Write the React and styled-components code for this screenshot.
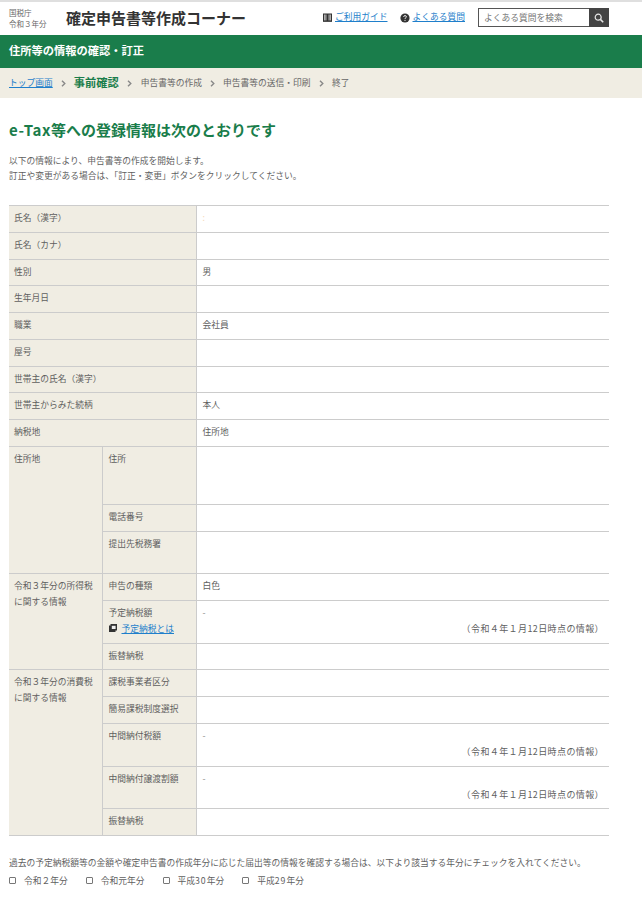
import styled, { createGlobalStyle } from 'styled-components';

const GlobalStyle = createGlobalStyle`
  html, body {
    margin: 0;
    padding: 0;
    background: #fff;
  }
  body {
    font-family: "Noto Sans CJK JP", "Noto Sans", sans-serif;
    font-size: 8.75px;
    line-height: 15.75px;
    color: #5f5f5f;
  }
`;

const green = '#1a7d4b';
const beige = '#f0ede3';
const line = '#cccccc';
const blue = '#1f7fcb';

const Header = styled.header`
  display: flex;
  align-items: center;
  box-sizing: border-box;
  height: 35px;
  padding: 0 33px 2px 9px;
  border-top: 2px solid #dfdfdf;
`;

const Agency = styled.div`
  width: 57px;
  font-size: 7.5px;
  line-height: 11px;
  color: #666;
`;

const SiteTitle = styled.div`
  flex: 1;
  font-size: 15px;
  line-height: 20px;
  font-weight: 700;
  color: #333;
`;

const HeadLink = styled.a`
  display: flex;
  align-items: center;
  gap: 3px;
  margin-right: ${p => p.$gap}px;
  color: ${blue};
  line-height: 12px;
  svg {
    flex: none;
  }
  span {
    margin-bottom: 2px;
    text-decoration: underline;
  }
`;

const Search = styled.div`
  display: flex;
  width: 131px;
  height: 19px;
`;

const SearchBox = styled.div`
  flex: 1;
  box-sizing: border-box;
  padding-left: 5px;
  border: 1px solid #555;
  border-right: 0;
  line-height: 17px;
  color: #777;
`;

const SearchButton = styled.div`
  display: flex;
  align-items: center;
  justify-content: center;
  width: 20px;
  background: #444;
`;

const PageBar = styled.div`
  height: 33px;
  padding-left: 9px;
  background: ${green};
  color: #fff;
  font-size: 11.25px;
  line-height: 31px;
  font-weight: 700;
`;

const Crumbs = styled.nav`
  display: flex;
  align-items: center;
  height: 30px;
  padding-left: 9px;
  background: ${beige};
`;

const Crumb = styled.span`
  color: ${p => (p.$current ? green : '#666')};
  font-size: ${p => (p.$current ? '11.25px' : '8.75px')};
  font-weight: ${p => (p.$current ? 700 : 400)};
`;

const CrumbLink = styled.a`
  color: ${blue};
  text-decoration: underline;
`;

const Sep = styled.svg`
  flex: none;
  width: 5px;
  height: 7px;
  margin: 0 ${p => p.$r}px 0 ${p => p.$l}px;
`;

const Main = styled.main`
  padding: 0 9px;
`;

const Heading = styled.h1`
  margin: 20px 0 0;
  font-size: 15px;
  line-height: 24px;
  font-weight: 700;
  color: ${green};
`;

const Latin = styled.span`
  letter-spacing: ${p => p.$s}px;
`;

const Lead = styled.p`
  margin: 11px 0 0;
  line-height: 15px;
`;

const InfoTable = styled.table`
  width: 600px;
  margin-top: 22px;
  border-collapse: collapse;
  table-layout: fixed;
  border-top: 1px solid ${line};
`;

const Label = styled.th`
  box-sizing: border-box;
  height: ${p => p.$h || 26.75}px;
  padding: 4px 5px 5px ${p => (p.$inner ? 6 : 5)}px;
  background: ${beige};
  border-bottom: 1px solid ${line};
  border-right: ${p => (p.$group ? `1px solid ${line}` : 0)};
  font-weight: 400;
  text-align: left;
  vertical-align: top;
`;

const Value = styled.td`
  box-sizing: border-box;
  padding: 4px 5px 5px 6px;
  border-bottom: 1px solid ${line};
  border-left: 1px solid ${line};
  vertical-align: top;
`;

const Faint = styled.span`
  color: ${p => p.$c};
`;

const AsOf = styled.div`
  font-size: 9px;
  letter-spacing: 0.4px;
  text-align: right;
`;

const HelpLink = styled.a`
  display: flex;
  align-items: center;
  gap: 5px;
  color: ${blue};
  span {
    text-decoration: underline;
  }
`;

const Note = styled.p`
  margin: 19px 0 0;
  line-height: 15px;
`;

const YearRow = styled.div`
  display: flex;
  margin-top: 3px;
`;

const Year = styled.label`
  display: flex;
  align-items: center;
  gap: 8px;
  margin-right: 18px;
  line-height: 15px;
`;

const Box = styled.span`
  box-sizing: border-box;
  width: 7px;
  height: 7px;
  border: 1px solid #777;
  border-radius: 1px;
`;

const Chevron = ({ l, r }) => (
  <Sep $l={l} $r={r} viewBox="0 0 5 7">
    <path d="M1 0.8 L3.8 3.5 L1 6.2" fill="none" stroke="#888" strokeWidth="1.4" />
  </Sep>
);

const simpleRows = [
  ['氏名（漢字）', <Faint $c="#f6d9b8">:</Faint>],
  ['氏名（カナ）', ''],
  ['性別', '男'],
  ['生年月日', ''],
  ['職業', '会社員'],
  ['屋号', ''],
  ['世帯主の氏名（漢字）', ''],
  ['世帯主からみた続柄', '本人'],
  ['納税地', '住所地'],
];

const Dash = () => <Faint $c="#888">-</Faint>;
const asOf = <AsOf>（令和４年１月12日時点の情報）</AsOf>;

const groups = [
  {
    title: '住所地',
    rows: [
      { label: '住所', h: 58 },
      { label: '電話番号', h: 27 },
      { label: '提出先税務署', h: 42 },
    ],
  },
  {
    title: <>令和３年分の所得税<br />に関する情報</>,
    rows: [
      { label: '申告の種類', value: '白色', h: 27 },
      {
        label: (
          <>
            予定納税額
            <HelpLink>
              <svg width="8" height="8" viewBox="0 0 8 8">
                <rect x="0" y="1.5" width="6.5" height="6.5" fill="#333" />
                <rect x="1.5" y="0" width="6.5" height="6.5" fill="#333" />
                <rect x="2.8" y="1.8" width="3.8" height="3.2" fill="#eee" />
              </svg>
              <span>予定納税とは</span>
            </HelpLink>
          </>
        ),
        value: <><Dash />{asOf}</>,
        h: 43,
      },
      { label: '振替納税', h: 26 },
    ],
  },
  {
    title: <>令和３年分の消費税<br />に関する情報</>,
    rows: [
      { label: '課税事業者区分', h: 27 },
      { label: '簡易課税制度選択', h: 27 },
      { label: '中間納付税額', value: <><Dash />{asOf}</>, h: 43 },
      { label: '中間納付譲渡割額', value: <><Dash />{asOf}</>, h: 42 },
      { label: '振替納税', h: 27 },
    ],
  },
];

const years = [
  '令和２年分',
  '令和元年分',
  <>平成<Latin $s={1}>30</Latin>年分</>,
  <>平成<Latin $s={1}>29</Latin>年分</>,
];

export default function App() {
  return (
    <>
      <GlobalStyle />
      <Header>
        <Agency>国税庁<br />令和３年分</Agency>
        <SiteTitle>確定申告書等作成コーナー</SiteTitle>
        <HeadLink $gap={12}>
          <svg width="9" height="9" viewBox="0 0 9 9">
            <path d="M0.6 1 H3.9 V8 H0.6 Z M5.1 1 H8.4 V8 H5.1 Z" fill="none" stroke="#333" strokeWidth="1.2" />
            <path d="M2.2 1 V8 M6.8 1 V8 M0 8.4 H9" stroke="#333" strokeWidth="0.8" />
          </svg>
          <span>ご利用ガイド</span>
        </HeadLink>
        <HeadLink $gap={13}>
          <svg width="10" height="10" viewBox="0 0 10 10">
            <circle cx="5" cy="5" r="4.6" fill="#333" />
            <path d="M3.6 3.9 Q3.7 2.6 5 2.6 Q6.4 2.6 6.4 3.8 Q6.4 4.5 5.6 4.9 Q5 5.2 5 6" fill="none" stroke="#fff" strokeWidth="0.9" />
            <circle cx="5" cy="7.3" r="0.6" fill="#fff" />
          </svg>
          <span>よくある質問</span>
        </HeadLink>
        <Search>
          <SearchBox>よくある質問を検索</SearchBox>
          <SearchButton>
            <svg width="10" height="10" viewBox="0 0 10 10">
              <circle cx="4.2" cy="4.2" r="3" fill="none" stroke="#e8e8e8" strokeWidth="1.2" />
              <path d="M6.4 6.4 L9.2 9.2" stroke="#e8e8e8" strokeWidth="1.6" />
            </svg>
          </SearchButton>
        </Search>
      </Header>
      <PageBar>住所等の情報の確認・訂正</PageBar>
      <Crumbs>
        <CrumbLink>トップ画面</CrumbLink>
        <Chevron l={8} r={8} />
        <Crumb $current>事前確認</Crumb>
        <Chevron l={8} r={9} />
        <Crumb>申告書等の作成</Crumb>
        <Chevron l={8} r={8} />
        <Crumb>申告書等の送信・印刷</Crumb>
        <Chevron l={8} r={8.5} />
        <Crumb>終了</Crumb>
      </Crumbs>
      <Main>
        <Heading><Latin $s={0.6}>e-Tax</Latin>等への登録情報は次のとおりです</Heading>
        <Lead>
          以下の情報により、申告書等の作成を開始します。<br />
          訂正や変更がある場合は、「訂正・変更」ボタンをクリックしてください。
        </Lead>
        <InfoTable>
          <colgroup>
            <col style={{ width: 93 }} />
            <col style={{ width: 94 }} />
            <col />
          </colgroup>
          <tbody>
            {simpleRows.map(([label, value]) => (
              <tr key={label}>
                <Label colSpan={2}>{label}</Label>
                <Value>{value}</Value>
              </tr>
            ))}
            {groups.map((group, g) =>
              group.rows.map((row, i) => (
                <tr key={`${g}-${i}`}>
                  {i === 0 && (
                    <Label $group rowSpan={group.rows.length}>
                      {group.title}
                    </Label>
                  )}
                  <Label $inner $h={row.h}>{row.label}</Label>
                  <Value>{row.value}</Value>
                </tr>
              ))
            )}
          </tbody>
        </InfoTable>
        <Note>過去の予定納税額等の金額や確定申告書の作成年分に応じた届出等の情報を確認する場合は、以下より該当する年分にチェックを入れてください。</Note>
        <YearRow>
          {years.map((year, i) => (
            <Year key={i}>
              <Box />
              <span>{year}</span>
            </Year>
          ))}
        </YearRow>
      </Main>
    </>
  );
}
